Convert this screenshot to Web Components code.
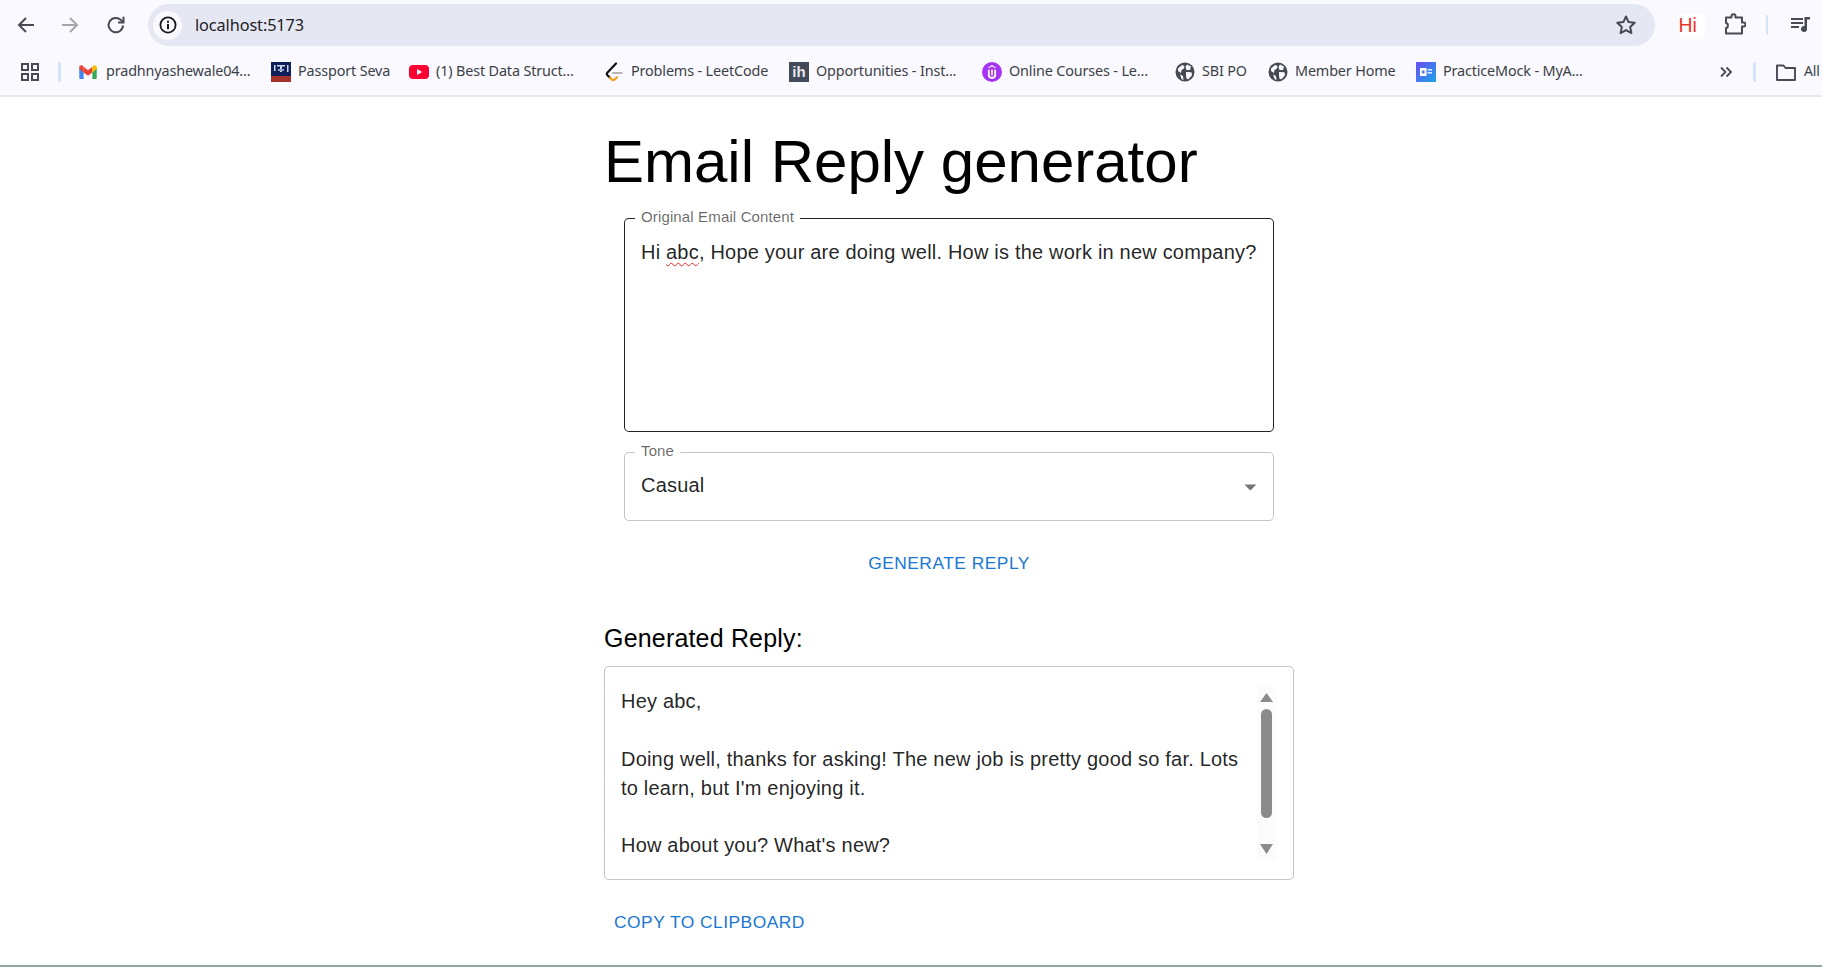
<!DOCTYPE html>
<html lang="en"><head><meta charset="utf-8"><title>Email Reply generator</title>
<style>
html,body{margin:0;height:100%;background:#fff;overflow:hidden}
body{display:flex;flex-direction:column;font-family:"Liberation Sans",Arial,sans-serif}
</style></head><body>
<browser-toolbar url="localhost:5173"></browser-toolbar>
<bookmark-bar>
  <bm-item w="192" text="pradhnyashewale04..."><svg viewBox="0 0 20 16" width="18" height="14" style="margin-left:-2px"><path fill="#4285f4" d="M0 3v11.5C0 15.3.7 16 1.5 16H5V7.5z"/><path fill="#34a853" d="M20 3v11.5c0 .8-.7 1.500-1.500 1.500H15V7.500z"/><path fill="#ea4335" d="M5 8.500V2l5 4 5-4v6.500l-5 3.800z"/><path fill="#ea4335" d="M0 4.500V2.500C0 .6 2.200-.6 3.800.7L5 2v6.500z"/><path fill="#fbbc04" d="M20 4.500V2.500c0-1.900-2.200-3.100-3.800-1.800L15 2v6.500z"/></svg></bm-item>
  <bm-item w="138" text="Passport Seva"><svg viewBox="0 0 20 20" width="20" height="20"><rect width="20" height="20" fill="#0f1f5c"/><rect y="14" width="20" height="6" fill="#a5322a"/><path fill="#cfd6e6" d="M3 3h1.500v6H3zM6 3h8v1.500h-3V10H9V4.500H6zM16 3h1.500v7H16z"/><rect x="7" y="7" width="6" height="2" fill="#8fa0c8"/></svg></bm-item>
  <bm-item w="195" text="(1) Best Data Struct..."><svg viewBox="0 0 20 14" width="20" height="14"><rect width="20" height="14" rx="4" fill="#ff0033"/><path fill="#fff" d="M8 4l5.200 3L8 10z"/></svg></bm-item>
  <bm-item w="185" text="Problems - LeetCode"><svg viewBox="0 0 20 20" width="20" height="20" fill="none" stroke-width="2.200" stroke-linecap="round"><path stroke="#111" d="M12 1.500L3.500 10.500c-.8.900-.8 2 0 2.800l2.500 2.500"/><path stroke="#f6a01a" d="M6 15.800l1.500 1.500c.9.900 2.500.9 3.400 0l2.100-2"/><path stroke="#b5b5b5" d="M9 11h8.500"/></svg></bm-item>
  <bm-item w="193" text="Opportunities - Inst..."><ih-icon>ih</ih-icon></bm-item>
  <bm-item w="193" text="Online Courses - Le..."><svg viewBox="0 0 20 20" width="20" height="20"><circle cx="10" cy="10" r="10" fill="#a435f0"/><path fill="none" stroke="#fff" stroke-width="1.800" stroke-linecap="round" d="M6.800 8.500v4.300a3.200 3.200 0 0 0 6.400 0V8.500"/><path fill="#fff" d="M10 3l3.500 2.200v1L10 4.600 6.500 6.200v-1z"/><path stroke="#fff" stroke-width="1.600" d="M10 7.500v6"/></svg></bm-item>
  <bm-item w="93" text="SBI PO"><globe-icon></globe-icon></bm-item>
  <bm-item w="148" text="Member Home"><globe-icon></globe-icon></bm-item>
  <bm-item w="150" text="PracticeMock - MyA..."><svg viewBox="0 0 20 20" width="20" height="20"><defs><linearGradient id="pm" x1="0" y1="0" x2="1" y2="1"><stop offset="0" stop-color="#6a4df0"/><stop offset="1" stop-color="#1ea4e9"/></linearGradient></defs><rect width="20" height="20" fill="url(#pm)"/><rect x="4" y="6" width="6.500" height="8" fill="#fff"/><rect x="11.500" y="7" width="4.500" height="1.600" fill="#dce6ff"/><rect x="11.500" y="10" width="4.500" height="1.600" fill="#dce6ff"/><rect x="6" y="8.500" width="2.500" height="3" fill="#4e78ea"/></svg></bm-item>
</bookmark-bar>
<email-page>
  <outlined-field slot="fields" label="Original Email Content" height="214" active>
    <div style="font-size:20px;letter-spacing:.2px;line-height:28.8px;white-space:nowrap;color:rgba(0,0,0,.87)">Hi <span style="text-decoration:underline wavy #f0281e 1.200px;text-underline-offset:3px">abc</span>, Hope your are doing well. How is the work in new company?</div>
  </outlined-field>
  <outlined-field slot="fields" label="Tone" height="69" select style="padding-top:18px">
    <div style="font-size:20px;letter-spacing:.2px;line-height:28.8px;color:rgba(0,0,0,.87)">Casual</div>
  </outlined-field>
</email-page>
<bottom-edge></bottom-edge>
<script>
const def=(name,html,init)=>customElements.define(name,class extends HTMLElement{
  constructor(){super();this.attachShadow({mode:'open'}).innerHTML=html;}
  connectedCallback(){init&&init(this,this.shadowRoot);}
});
const C='#474a54';
def('browser-toolbar',`<style>
:host{display:flex;align-items:center;height:48px;background:#f9f9ff;box-sizing:border-box;padding-bottom:2px;flex:none}
svg{display:block;flex:none}
.nav{display:flex;align-items:center;width:148px;flex:none;margin-top:4px}
.nav svg:nth-child(1){margin-left:14px}
.nav svg:nth-child(2){margin-left:20px}
.nav svg:nth-child(3){margin-left:22px}
.bar{width:1507px;height:42px;flex:none;background:#e5e8f3;border-radius:21px;display:flex;align-items:center;box-sizing:border-box;padding:0 17px 0 5px;margin-top:4px}
.info{width:29px;height:29px;border-radius:50%;background:#f9f9ff;display:flex;align-items:center;justify-content:center;flex:none}
.url{font:16.300px "Noto Sans","Open Sans",sans-serif;color:#1f2023;margin-left:13px;flex:1;letter-spacing:-.1px}
.right{display:flex;align-items:center;margin-top:4px}
.hi{font:19.500px "Liberation Sans",sans-serif;color:#e8372c;margin-left:23.500px;width:26px;text-align:left;background:#fff}
.sep{width:2px;height:20px;background:#d3e2fb;margin:0 20px 0 20px;border-radius:1px}
</style>
<div class="nav">
<svg width="24" height="24" viewBox="0 0 24 24" fill="none" stroke="${C}" stroke-width="2"><path d="M20 12H5M12 5l-7 7 7 7"/></svg>
<svg width="24" height="24" viewBox="0 0 24 24" fill="none" stroke="#a3a5ad" stroke-width="2"><path d="M4 12h15M12 5l7 7-7 7"/></svg>
<svg width="24" height="24" viewBox="0 0 24 24" fill="none" stroke="${C}" stroke-width="2"><path d="M19 12.500a7.200 7.200 0 1 1-2.200-5.600L19 9"/><path d="M19.500 3.800V9.500H14"/></svg>
</div>
<div class="bar"><div class="info"><svg width="20" height="20" viewBox="0 0 20 20"><circle cx="10" cy="10" r="7.600" fill="none" stroke="#1a1a1e" stroke-width="1.800"/><rect x="9" y="9" width="2" height="5.200" fill="#1a1a1e"/><rect x="9" y="5.800" width="2" height="2" fill="#1a1a1e"/></svg></div>
<span class="url"></span>
<svg width="24" height="24" viewBox="0 0 24 24" fill="none" stroke="${C}" stroke-width="2" stroke-linejoin="round"><path d="M12 3.500l2.600 5.600 6.100.7-4.500 4.200 1.200 6.100L12 17.100l-5.400 3 1.200-6.100-4.500-4.200 6.100-.7z"/></svg></div>
<div class="right"><span class="hi">Hi</span>
<svg style="margin-left:17px" width="24" height="24" viewBox="0 0 24 24" fill="none" stroke="${C}" stroke-width="2" stroke-linejoin="round"><path d="M4 5h5.500V3.800a2 2 0 0 1 4 0V5H20v5h1.500a2 2 0 0 1 0 4H20v7H4v-5.500c2.500 0 2.500-5 0-5z" transform="translate(0 -.5)"/></svg>
<div class="sep"></div>
<svg style="margin-left:1.500px" width="24" height="24" viewBox="0 0 24 24" fill="${C}"><rect x="2" y="5" width="12" height="2"/><rect x="2" y="9" width="12" height="2"/><rect x="2" y="13" width="8" height="2"/><path d="M15.500 4H21v2.400h-3V16a3 3 0 1 1-2.500-3z"/></svg></div>`,(h,s)=>{s.querySelector('.url').textContent=h.getAttribute('url')});

def('bookmark-bar',`<style>
:host{display:flex;align-items:center;height:47px;background:#f9f9ff;border-bottom:2px solid #e6e8f0;flex:none;box-sizing:content-box;padding-left:20px;overflow:hidden}
svg{display:block;flex:none}
.sep{width:3px;height:20px;border-radius:2px;background:#d3e2fb;flex:none}
.b{margin-left:20px;margin-right:20px}
.all{font:14px "Noto Sans","Open Sans",sans-serif;letter-spacing:-.15px;color:#3c3f46;margin-left:8px;white-space:nowrap;padding-bottom:2px}
</style>
<svg width="20" height="20" viewBox="0 0 20 20" fill="none" stroke="${C}" stroke-width="2"><rect x="2" y="2" width="6" height="6"/><rect x="12" y="2" width="6" height="6"/><rect x="2" y="12" width="6" height="6"/><rect x="12" y="12" width="6" height="6"/></svg>
<div class="sep" style="margin-left:18px;margin-right:18px"></div>
<slot></slot>
<svg style="margin-left:153px" width="14" height="14" viewBox="0 0 14 14" fill="none" stroke="${C}" stroke-width="1.800"><path d="M2 2.500L6.500 7 2 11.500M7.500 2.500L12 7l-4.500 4.500"/></svg>
<div class="sep b"></div>
<svg width="20" height="18" viewBox="0 0 20 18" fill="none" stroke="${C}" stroke-width="1.900" stroke-linejoin="round" style="flex:none"><path d="M1 2.500h6.500l2 2.500H19v12H1z"/></svg>
<span class="all">All</span>`);

def('bm-item',`<style>
:host{display:flex;align-items:center;flex:none;box-sizing:border-box;height:24px}
.i{width:20px;display:flex;justify-content:center;flex:none;margin-right:7px}
.t{font:14.400px "Noto Sans","Open Sans",sans-serif;color:#3c3f46;white-space:nowrap;letter-spacing:-.15px;padding-bottom:2px}
</style><div class="i"><slot></slot></div><span class="t"></span>`,(h,s)=>{h.style.width=h.getAttribute('w')+'px';s.querySelector('.t').textContent=h.getAttribute('text')});

def('ih-icon',`<style>:host{display:flex;width:20px;height:20px;background:#434a5a;color:#e6e8ec;font:bold 15px "Liberation Sans",sans-serif;align-items:center;justify-content:center;line-height:20px}</style><slot></slot>`);

def('globe-icon',`<style>:host{display:block;width:20px;height:20px}svg{display:block}</style><svg width="20" height="20" viewBox="0 0 20 20"><circle cx="10" cy="10" r="9.500" fill="#474a52"/><path fill="#f9f9ff" d="M3 6.500l4-3.500 2.500 1L9 6.500 6.500 8 6 11 3 9zM12 2.500l4 2-1 3.500h-3.500L10.500 5zM11 10l5.500.2.500 3-3.500 4-2-.5-.5-3.200zM5 12.500l3 1.500.5 4-2-1z"/></svg>`);

def('email-page',`<style>
:host{display:block;flex:1;min-height:0;padding-left:604px;width:690px;box-sizing:content-box}
h1{font:400 60px/72px "Liberation Sans",Arial,sans-serif;margin:0;padding-top:28.500px;height:69px;box-sizing:content-box;color:#000}
.fields{padding:23.500px 20.500px 0 20px;display:flex;flex-direction:column;gap:20px}
.center{display:flex;justify-content:center;padding-top:28px}
h2{font:400 25px/32px "Liberation Sans",Arial,sans-serif;letter-spacing:.18px;margin:43.500px 0 0;color:#000}
.box{margin-top:12px}
.copy{padding-top:28px;padding-left:10px}
</style>
<h1>Email Reply generator</h1>
<div class="fields"><slot name="fields"></slot></div>
<div class="center"><text-button>GENERATE REPLY</text-button></div>
<h2>Generated Reply:</h2>
<reply-box class="box"></reply-box>
<div class="copy"><text-button>COPY TO CLIPBOARD</text-button></div>`);

def('outlined-field',`<style>
:host{display:block;position:relative;box-sizing:border-box;border:1.200px solid rgba(0,0,0,.23);border-radius:5px;padding:19px 16px;background:#fff}
:host([active]){border-color:rgba(0,0,0,.87)}
.l{position:absolute;left:10px;top:-10px;background:#fff;padding:0 6px;font:15px/16px "Liberation Sans",Arial,sans-serif;letter-spacing:.14px;color:rgba(0,0,0,.6);white-space:nowrap}
svg{position:absolute;right:8px;top:50%;transform:translateY(-14.400px);display:none}
:host([select]) svg{display:block}
</style><span class="l"></span><slot></slot><svg width="28.800" height="28.800" viewBox="0 0 24 24" fill="rgba(0,0,0,.54)"><path d="M7 10l5 5 5-5z"/></svg>`,(h,s)=>{s.querySelector('.l').textContent=h.getAttribute('label');h.style.height=h.getAttribute('height')+'px'});

def('text-button',`<style>
:host{display:inline-block;font:400 17.400px/29px "Liberation Sans",Arial,sans-serif;letter-spacing:.48px;color:#1976d2;text-transform:uppercase}
</style><slot></slot>`);

def('reply-box',`<style>
:host{display:flex;box-sizing:border-box;width:690px;height:214px;border:1.200px solid rgba(0,0,0,.23);border-radius:5px;padding:20.800px 17.500px 18px 16px;gap:0;background:#fff}
.t{flex:1;min-width:0;padding-right:15px;font:20px/28.800px "Liberation Sans",Arial,sans-serif;letter-spacing:.2px;color:rgba(0,0,0,.87);white-space:pre-line}
</style><div class="t">Hey abc,

Doing well, thanks for asking! The new job is pretty good so far. Lots to learn, but I'm enjoying it.

How about you? What's new?</div><fake-scrollbar></fake-scrollbar>`);

def('fake-scrollbar',`<style>
:host{display:flex;flex-direction:column;align-items:center;width:19px;flex:none;background:#fbfbfb;height:172px}
svg{display:block;flex:none}
.th{width:11px;height:109px;border-radius:6px;background:#8b8b8b;flex:none}
</style>
<svg style="margin-top:6px;margin-bottom:7px" width="13" height="9" viewBox="0 0 13 9"><path fill="#8b8b8b" d="M6.500 0L13 9H0z"/></svg>
<div class="th"></div>
<svg style="margin-top:26px" width="13" height="10" viewBox="0 0 13 10"><path fill="#8b8b8b" d="M0 0h13L6.500 10z"/></svg>`);

def('bottom-edge',`<style>:host{display:block;height:2px;flex:none;background:#8fa5a5}</style>`);
</script>
</body></html>
